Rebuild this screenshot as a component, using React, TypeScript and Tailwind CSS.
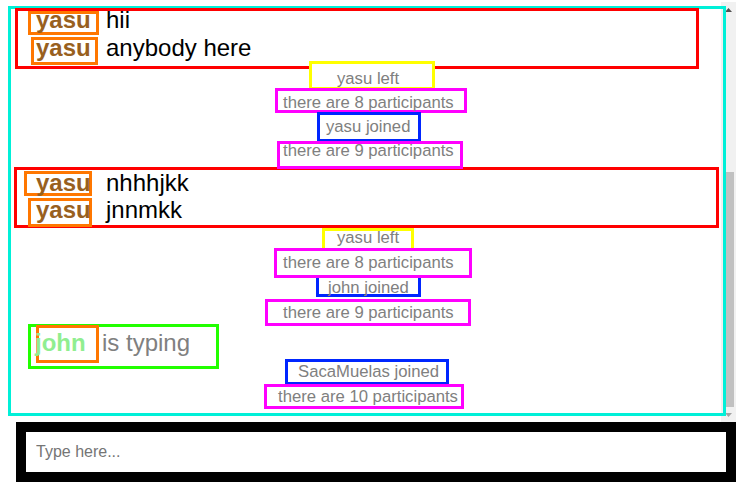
type Notice = { text: string; line: string; box: string; label: string };

const FIRST: Notice[] = [
  { text: 'yasu left', line: 'h-[24px]', box: 'z-10 ml-[298px] mt-[-6px] w-[126px] h-[29px] border-[#ffff00]', label: 'mt-[3px] pl-[25px] leading-[24px]' },
  { text: 'there are 8 participants', line: 'h-[24px]', box: 'z-10 ml-[264px] mt-[-3px] w-[192px] h-[25px] border-[#ff00ff]', label: 'mt-0 pl-[5px] leading-[24px]' },
  { text: 'yasu joined', line: 'h-[24px]', box: 'z-10 ml-[306px] mt-[-3px] w-[104px] h-[30px] border-[#0026ff]', label: 'mt-0 pl-[6px] leading-[24px]' },
  { text: 'there are 9 participants', line: 'h-[24px]', box: 'z-10 ml-[266px] mt-[2px] w-[186px] h-[28px] border-[#ff00ff]', label: 'mt-[-5px] pl-[3px] leading-[24px]' },
];

const SECOND: Notice[] = [
  { text: 'yasu left', line: 'h-[25px]', box: 'z-10 ml-[311px] mt-[3px] w-[92px] h-[23px] border-[#ffff00]', label: 'mt-[-6px] pl-[12px] leading-[25px]' },
  { text: 'there are 8 participants', line: 'h-[25px]', box: 'z-10 ml-[263px] mt-[-2px] w-[198px] h-[30px] border-[#ff00ff]', label: 'mt-[-1px] pl-[6px] leading-[25px]' },
  { text: 'john joined', line: 'h-[25px]', box: 'z-[5] ml-[305px] mt-0 w-[105px] h-[22px] border-[#0026ff]', label: 'mt-[-3px] pl-[9px] leading-[25px]' },
  { text: 'there are 9 participants', line: 'h-[25px]', box: 'z-10 ml-[254px] mt-[-1px] w-[206px] h-[27px] border-[#ff00ff]', label: 'mt-[-2px] pl-[15px] leading-[25px]' },
];

const THIRD: Notice[] = [
  { text: 'SacaMuelas joined', line: 'h-[25px]', box: 'z-10 ml-[274px] mt-0 w-[164px] h-[26px] border-[#0026ff]', label: 'mt-[-3px] pl-[10px] leading-[25px]' },
  { text: 'there are 10 participants', line: 'h-[25px]', box: 'z-10 ml-[253px] mt-0 w-[200px] h-[25px] border-[#ff00ff]', label: 'mt-[-3px] pl-[11px] leading-[25px]' },
];

type Line = { msg: string; row: string; cell: string; box: string; name: string; body: string };

const BLOCK_A: Line[] = [
  { msg: 'hii', row: 'h-[26px]', cell: 'w-[88px]', box: 'ml-[10px] mt-0 w-[71px] h-[24px]', name: 'mt-[-3px] pl-[5px]', body: 'mt-0' },
  { msg: 'anybody here', row: 'h-[29px]', cell: 'w-[88px]', box: 'ml-[13px] mt-0 w-[67px] h-[28px]', name: 'mt-[-1px] pl-[2px]', body: 'mt-[2px]' },
];

const BLOCK_B: Line[] = [
  { msg: 'nhhhjkk', row: 'h-[27px]', cell: 'w-[89px]', box: 'ml-[7px] mt-[1px] w-[68px] h-[25px]', name: 'mt-0 pl-[9px]', body: 'mt-[4px]' },
  { msg: 'jnnmkk', row: 'h-[28px]', cell: 'w-[89px]', box: 'ml-[11px] mt-[1px] w-[64px] h-[29px]', name: 'mt-0 pl-[5px]', body: 'mt-[4px]' },
];

function NoticeList({ items, className }: { items: Notice[]; className: string }) {
  return (
    <div className={className}>
      {items.map((n, i) => (
        <div key={i} className={`flex items-start ${n.line}`}>
          <div className={`relative shrink-0 border-[3px] bg-white ${n.box}`}>
            <p className={`whitespace-nowrap text-[16.7px] text-[#808080] ${n.label}`}>{n.text}</p>
          </div>
        </div>
      ))}
    </div>
  );
}

function MessageBlock({ lines, className }: { lines: Line[]; className: string }) {
  return (
    <div className={`border-[3px] border-[#ff0000] ${className}`}>
      {lines.map((l, i) => (
        <div key={i} className={`flex items-start ${l.row}`}>
          <div className={`shrink-0 ${l.cell}`}>
            <div className={`border-[3px] border-[#ff7700] ${l.box}`}>
              <p className={`whitespace-nowrap text-[24px] font-bold leading-[18px] text-[#98601e] ${l.name}`}>yasu</p>
            </div>
          </div>
          <p className={`whitespace-nowrap text-[24px] leading-[18px] text-black ${l.body}`}>{l.msg}</p>
        </div>
      ))}
    </div>
  );
}

function Scrollbar() {
  return (
    <div className="absolute right-0 top-0 flex h-full w-[15px] flex-col bg-[#f1f1f1]">
      <div className="flex h-[15px] items-center justify-center">
        <svg width="7" height="4" viewBox="0 0 7 4">
          <polygon points="0,4 3.5,0 7,4" fill="#505050" />
        </svg>
      </div>
      <div className="mx-[2px] mt-[155px] h-[235px] bg-[#c1c1c1]" />
      <div className="mt-auto flex h-[15px] items-center justify-center">
        <svg width="7" height="4" viewBox="0 0 7 4">
          <polygon points="0,0 7,0 3.5,4" fill="#a3a3a3" />
        </svg>
      </div>
    </div>
  );
}

export default function App() {
  return (
    <div className="relative h-[494px] w-[750px] overflow-hidden bg-white font-['Liberation_Sans',Arial,sans-serif]">
      {/* chat log */}
      <div className="relative mt-[2px] h-[420px] w-[736px] pt-[4px]">
        <Scrollbar />
        <div className="relative z-10 ml-[8px] h-[410px] w-[718px] border-[3px] border-[#00f0d8]">
          <MessageBlock lines={BLOCK_A} className="ml-[4px] mt-[-1px] h-[61px] w-[684px]" />
          <NoticeList items={FIRST} className="mt-[-2px]" />
          <MessageBlock lines={BLOCK_B} className="ml-[3px] mt-[4px] h-[61px] w-[705px]" />
          <NoticeList items={SECOND} className="mt-[-3px]" />

          {/* typing indicator */}
          <div className="ml-[17px] mt-[-1px] flex h-[45px] w-[191px] items-start border-[3px] border-[#22ff00]">
            <div className="ml-[5px] mt-[-2px] h-[38px] w-[63px] shrink-0 border-[3px] border-[#ff7700]">
              <p className="ml-[-4px] mt-[3px] whitespace-nowrap text-[24px] font-bold leading-[24px] text-[#90ee90]">john</p>
            </div>
            <p className="ml-[3px] mt-[4px] whitespace-nowrap text-[24px] leading-[24px] text-[#808080]">is typing</p>
          </div>

          <NoticeList items={THIRD} className="mt-[-10px]" />
        </div>
      </div>

      {/* composer */}
      <div className="ml-[16px] h-[60px] w-[720px] border-[10px] border-black">
        <input
          className="block h-full w-full bg-white pl-[10px] text-[16px] text-black outline-none placeholder:text-[#757575]"
          placeholder="Type here..."
        />
      </div>
    </div>
  );
}
